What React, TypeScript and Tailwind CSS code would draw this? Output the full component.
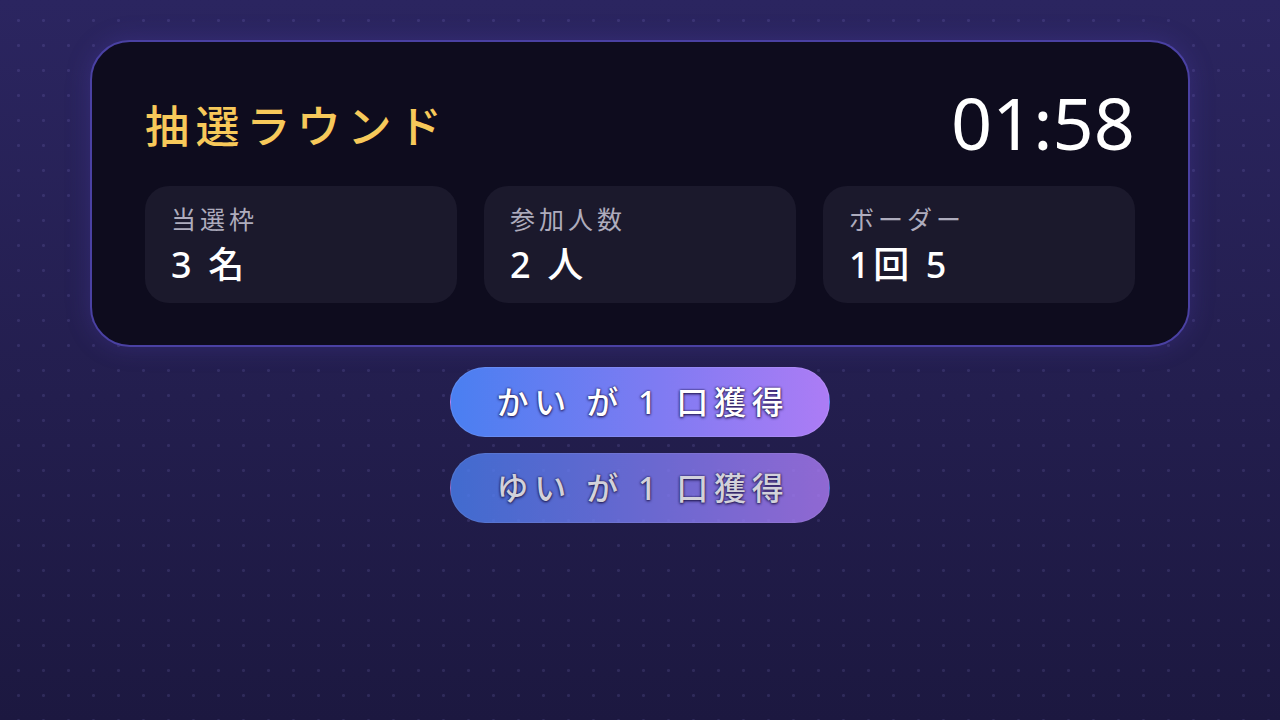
const stats = [
  { label: "当選枠", value: "3 名" },
  { label: "参加人数", value: "2 人" },
  { label: "ボーダー", value: "1回 5" },
];

const winners = [
  { name: "かい", count: 1, dim: false },
  { name: "ゆい", count: 1, dim: true },
];

const jp = "font-['Noto_Sans','Noto_Sans_CJK_JP',sans-serif]";

export default function App() {
  return (
    <div className="min-h-screen bg-[linear-gradient(180deg,#2b2560_0%,#231e4e_55%,#1c1840_100%)]">
      <div
        className={`min-h-screen bg-[radial-gradient(circle,rgba(170,160,255,0.13)_1.2px,transparent_1.8px)] bg-[size:25px_25px] bg-[position:6px_8px] pt-[40px] ${jp}`}
      >
        <div className="mx-auto w-[1100px] rounded-[40px] border-2 border-[#4a41a3] bg-[#0e0c1e] px-[53px] pt-[52px] pb-[42px] shadow-[0_0_24px_rgba(90,70,200,0.25)]">
          <div className="flex items-center justify-between">
            <h1 className="text-[44px] font-medium leading-none tracking-[0.15em] text-[#f7c95a]">抽選ラウンド</h1>
            <div className="-mt-[8px] text-[72px] leading-none text-white">01:58</div>
          </div>
          <div className="mt-[28px] grid grid-cols-3 gap-[27px]">
            {stats.map((s) => (
              <div key={s.label} className="h-[117px] rounded-[24px] bg-[#1b192c] px-[26px] pt-[16px]">
                <div className="text-[25px] leading-[34px] tracking-[0.16em] text-[#aeacbd]">{s.label}</div>
                <div className="mt-[9px] text-[36px] font-medium leading-[40px] tracking-[0.1em] text-white">{s.value}</div>
              </div>
            ))}
          </div>
        </div>
        <div className="mt-[20px] flex flex-col items-center gap-[16px]">
          {winners.map((w) => (
            <div
              key={w.name}
              className={`flex h-[70px] w-[380px] items-center justify-center rounded-full border border-white/10 bg-[linear-gradient(90deg,#4a7ff1_0%,#7f7bf2_55%,#ac7cf5_100%)] pl-[6px] text-[32px] font-medium tracking-[0.18em] text-white [text-shadow:0_1px_3px_rgba(20,10,60,0.9),0_0_2px_rgba(20,10,60,0.9)] ${w.dim ? "opacity-80" : ""}`}
            >
              {w.name} が {w.count} 口獲得
            </div>
          ))}
        </div>
      </div>
    </div>
  );
}
